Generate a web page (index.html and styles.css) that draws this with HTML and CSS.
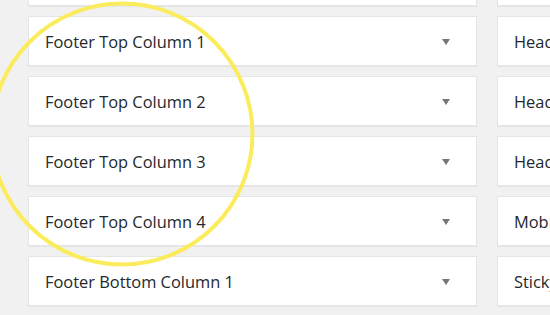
FILE: index.html
```html
<!DOCTYPE html>
<html>
<head>
<meta charset="utf-8">
<link rel="stylesheet" href="styles.css">
</head>
<body>
<div class="page">
  <div class="col col-left">
    <div class="card"><span class="label">Footer Widgets</span><span class="arrow"></span></div>
    <div class="card"><span class="label">Footer Top Column 1</span><span class="arrow"></span></div>
    <div class="card"><span class="label">Footer Top Column 2</span><span class="arrow"></span></div>
    <div class="card"><span class="label">Footer Top Column 3</span><span class="arrow"></span></div>
    <div class="card"><span class="label">Footer Top Column 4</span><span class="arrow"></span></div>
    <div class="card"><span class="label">Footer Bottom Column 1</span><span class="arrow"></span></div>
  </div>
  <div class="col col-right">
    <div class="card"><span class="label">Header</span></div>
    <div class="card"><span class="label">Header Left</span></div>
    <div class="card"><span class="label">Header Right</span></div>
    <div class="card"><span class="label">Header Center</span></div>
    <div class="card"><span class="label">Mobile Menu</span></div>
    <div class="card"><span class="label">Sticky Header</span></div>
  </div>
  <svg class="ring" width="280" height="280" viewBox="0 0 280 280">
    <circle cx="140" cy="140" r="130.5" fill="none" stroke="#fbec5d" stroke-width="4"/>
  </svg>
</div>
</body>
</html>
```

FILE: styles.css
```css
html, body {
  margin: 0;
  padding: 0;
  background: #f1f1f1;
  overflow: hidden;
}
body {
  width: 550px;
  height: 315px;
  font-family: "Open Sans", "Noto Sans", sans-serif;
  color: #23282d;
}
.page {
  position: relative;
  display: grid;
  grid-template-columns: 449px 200px;
  column-gap: 20px;
  padding-left: 28px;
  margin-top: -44px;
}
.col {
  display: flex;
  flex-direction: column;
  gap: 10px;
}
.card {
  box-sizing: border-box;
  height: 50px;
  background: #fff;
  border: 1px solid #e5e5e5;
  box-shadow: 0 1px 1px rgba(0,0,0,0.04);
  display: flex;
  align-items: center;
  justify-content: space-between;
  padding: 0 26px 0 16px;
}
.label {
  font-size: 16.4px;
  font-weight: 500;
  white-space: nowrap;
}
.arrow {
  width: 0;
  height: 0;
  border-left: 4px solid transparent;
  border-right: 4px solid transparent;
  border-top: 6px solid #72777c;
  margin-top: 2px;
}
.ring {
  position: absolute;
  left: -18px;
  top: 38px;
  pointer-events: none;
}
```
